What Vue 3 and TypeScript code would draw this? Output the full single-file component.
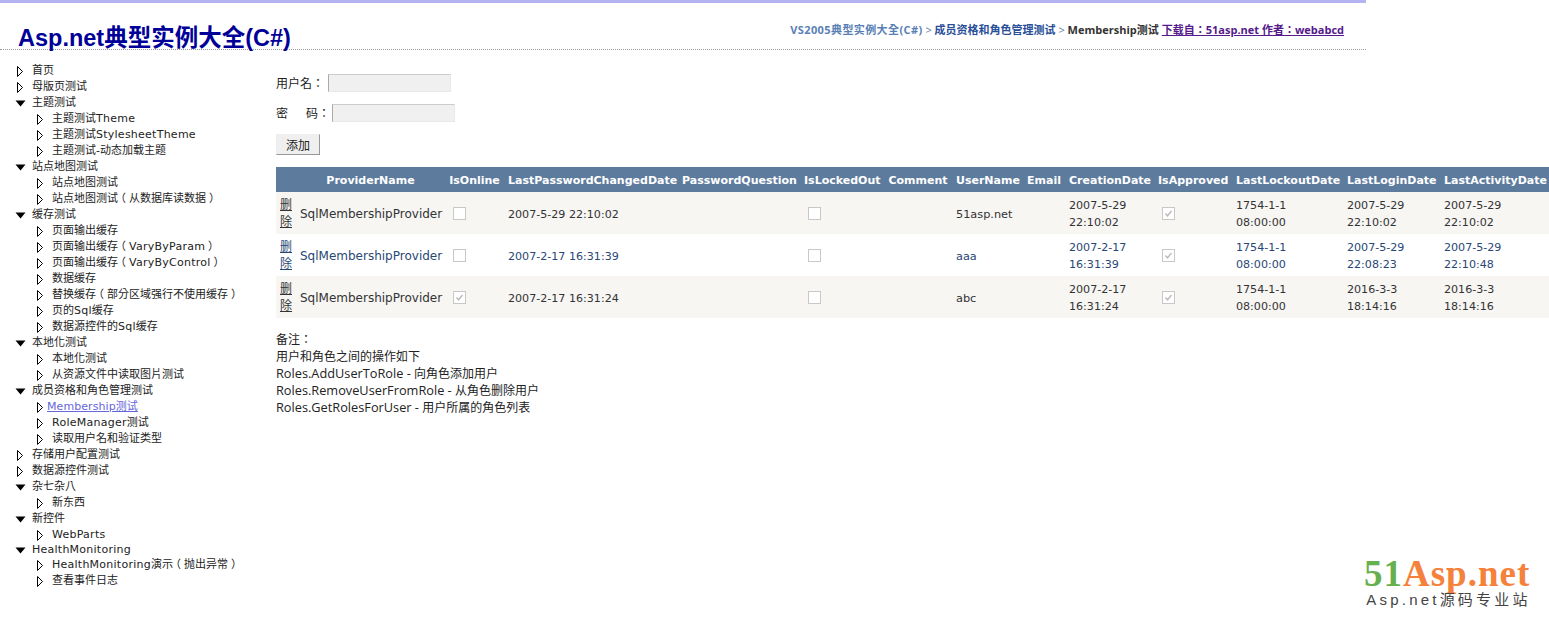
<script setup lang="ts">
interface TreeItem {
  label: string;
  level: number;
  open?: boolean;
  active?: boolean;
  short?: boolean;
}
interface UserRow {
  online: boolean;
  changed: string;
  name: string;
  created: string[];
  lockout: string[];
  login: string[];
  activity: string[];
}

const tree: TreeItem[] = [
  { label: '首页', level: 1 },
  { label: '母版页测试', level: 1 },
  { label: '主题测试', level: 1, open: true },
  { label: '主题测试Theme', level: 2 },
  { label: '主题测试StylesheetTheme', level: 2 },
  { label: '主题测试-动态加载主题', level: 2 },
  { label: '站点地图测试', level: 1, open: true },
  { label: '站点地图测试', level: 2 },
  { label: '站点地图测试（从数据库读数据）', level: 2 },
  { label: '缓存测试', level: 1, open: true },
  { label: '页面输出缓存', level: 2 },
  { label: '页面输出缓存（VaryByParam）', level: 2 },
  { label: '页面输出缓存（VaryByControl）', level: 2 },
  { label: '数据缓存', level: 2 },
  { label: '替换缓存（部分区域强行不使用缓存）', level: 2 },
  { label: '页的Sql缓存', level: 2 },
  { label: '数据源控件的Sql缓存', level: 2 },
  { label: '本地化测试', level: 1, open: true },
  { label: '本地化测试', level: 2 },
  { label: '从资源文件中读取图片测试', level: 2 },
  { label: '成员资格和角色管理测试', level: 1, open: true },
  { label: 'Membership测试', level: 2, active: true },
  { label: 'RoleManager测试', level: 2 },
  { label: '读取用户名和验证类型', level: 2 },
  { label: '存储用户配置测试', level: 1 },
  { label: '数据源控件测试', level: 1 },
  { label: '杂七杂八', level: 1, open: true },
  { label: '新东西', level: 2 },
  { label: '新控件', level: 1, open: true },
  { label: 'WebParts', level: 2, short: true },
  { label: 'HealthMonitoring', level: 1, open: true, short: true },
  { label: 'HealthMonitoring演示（抛出异常）', level: 2 },
  { label: '查看事件日志', level: 2 },
];

// brackets sit centred in the original font and latin runs are a bit wider
const parts = (label: string) => label.split(/(（|）|[A-Za-z]+)/).filter(Boolean);
const partClass = (p: string) => (p === '（' ? 'open-b' : p === '）' ? 'close-b' : /^[A-Za-z]/.test(p) ? 'latin' : '');

const headers = [
  '', 'ProviderName', 'IsOnline', 'LastPasswordChangedDate', 'PasswordQuestion', 'IsLockedOut',
  'Comment', 'UserName', 'Email', 'CreationDate', 'IsApproved', 'LastLockoutDate', 'LastLoginDate', 'LastActivityDate',
];
const widths = [20, 149, 59, 174, 122, 84, 68, 71, 42, 89, 78, 111, 97, 109];

const rows: UserRow[] = [
  {
    online: false, changed: '2007-5-29 22:10:02', name: '51asp.net',
    created: ['2007-5-29', '22:10:02'], lockout: ['1754-1-1', '08:00:00'],
    login: ['2007-5-29', '22:10:02'], activity: ['2007-5-29', '22:10:02'],
  },
  {
    online: false, changed: '2007-2-17 16:31:39', name: 'aaa',
    created: ['2007-2-17', '16:31:39'], lockout: ['1754-1-1', '08:00:00'],
    login: ['2007-5-29', '22:08:23'], activity: ['2007-5-29', '22:10:48'],
  },
  {
    online: true, changed: '2007-2-17 16:31:24', name: 'abc',
    created: ['2007-2-17', '16:31:24'], lockout: ['1754-1-1', '08:00:00'],
    login: ['2016-3-3', '18:14:16'], activity: ['2016-3-3', '18:14:16'],
  },
];

const notes = [
  { en: '', zh: '备注：' },
  { en: '', zh: '用户和角色之间的操作如下' },
  { en: 'Roles.AddUserToRole - ', zh: '向角色添加用户' },
  { en: 'Roles.RemoveUserFromRole - ', zh: '从角色删除用户' },
  { en: 'Roles.GetRolesForUser - ', zh: '用户所属的角色列表' },
];
</script>

<template>
  <div class="page">
    <header class="top">
      <h1 class="title">Asp.net典型实例大全(C#)</h1>
      <div class="crumbs">
        <span class="c1">VS2005典型实例大全(C#)</span>
        <span class="sep"> &gt; </span>
        <span class="c2">成员资格和角色管理测试</span>
        <span class="sep"> &gt; </span>
        <span class="c3">Membership测试</span>
        <a class="c4">下载自：51asp.net 作者：webabcd</a>
      </div>
    </header>

    <div class="body">
      <nav class="tree">
        <div v-for="(item, i) in tree" :key="i" class="node" :class="['lv' + item.level, { short: item.short }]">
          <svg v-if="item.open" class="arrow" width="11" height="7" viewBox="0 0 11 7">
            <path d="M0.5 0.5H10.5L5.5 6.5Z" fill="#000" />
          </svg>
          <svg v-else class="arrow closed" width="11" height="11" viewBox="0 0 11 11">
            <path d="M2.5 0.5L7.5 5.5L2.5 10.5Z" fill="#fff" stroke="#000" />
          </svg>
          <a v-if="item.active" class="active">{{ item.label }}</a>
          <span v-else><span v-for="(p, j) in parts(item.label)" :key="j" :class="partClass(p)">{{ p }}</span></span>
        </div>
      </nav>

      <main class="content">
        <div class="field">
          <span class="lbl">用户名：</span>
          <input class="txt" type="text" />
        </div>
        <div class="field">
          <span class="lbl wide">密<i class="gap"></i>码：</span>
          <input class="txt" type="password" />
        </div>
        <button class="btn" type="button">添加</button>

        <table class="grid">
          <colgroup>
            <col v-for="(w, i) in widths" :key="i" :style="{ width: w + 'px' }" />
          </colgroup>
          <thead>
            <tr>
              <th v-for="h in headers" :key="h">{{ h }}</th>
            </tr>
          </thead>
          <tbody>
            <tr v-for="(r, i) in rows" :key="i" :class="i % 2 ? 'alt' : 'odd'">
              <td class="del"><a>删除</a></td>
              <td>SqlMembershipProvider</td>
              <td class="ck"><span class="box"><svg v-if="r.online" width="11" height="11" viewBox="0 0 11 11"><path d="M2.5 5.5L4.5 7.8L8.5 3" fill="none" stroke="#bbb" stroke-width="1.4" /></svg></span></td>
              <td class="date">{{ r.changed }}</td>
              <td></td>
              <td class="ck"><span class="box"></span></td>
              <td></td>
              <td class="uname">{{ r.name }}</td>
              <td></td>
              <td class="date">{{ r.created[0] }}<br />{{ r.created[1] }}</td>
              <td class="ck"><span class="box"><svg width="11" height="11" viewBox="0 0 11 11"><path d="M2.5 5.5L4.5 7.8L8.5 3" fill="none" stroke="#bbb" stroke-width="1.4" /></svg></span></td>
              <td class="date">{{ r.lockout[0] }}<br />{{ r.lockout[1] }}</td>
              <td class="date">{{ r.login[0] }}<br />{{ r.login[1] }}</td>
              <td class="date">{{ r.activity[0] }}<br />{{ r.activity[1] }}</td>
            </tr>
          </tbody>
        </table>

        <div class="notes">
          <div v-for="n in notes" :key="n.zh"><span class="en">{{ n.en }}</span>{{ n.zh }}</div>
        </div>
      </main>
    </div>

    <div class="logo">
      <div class="logo-main"><span class="green">51</span>Asp.net</div>
      <div class="logo-sub">Asp.net源码专业站</div>
    </div>
  </div>
</template>

<style>
html, body {
  margin: 0;
  overflow: hidden;
  background: #fff;
}
</style>

<style scoped>
.page {
  position: relative;
  width: 1549px;
  height: 626px;
  overflow: hidden;
  font-family: "DejaVu Sans", "Noto Sans CJK TC", sans-serif;
  font-size: 11px;
  color: #000;
}
.top {
  width: 1366px;
  height: 46px;
  border-top: 3px solid #b4b4f2;
  border-bottom: 1px dotted #999;
  display: flex;
  justify-content: space-between;
}
.title {
  margin: 21px 0 0 18px;
  font-family: "Liberation Sans", "Noto Sans CJK SC", sans-serif;
  font-size: 23.5px;
  line-height: 28px;
  font-weight: bold;
  color: #000099;
}
.crumbs {
  margin: 20px 22px 0 0;
  font-size: 11px;
  line-height: 14px;
  font-family: "Open Sans", "Noto Sans CJK TC", sans-serif;
  font-weight: 700;
  white-space: pre;
}
.c1 { color: #5a7fb5; letter-spacing: 0.4px; }
.c2 { color: #284e98; }
.c3 { color: #333; }
.sep { color: #5d7b9d; font-weight: 400; }
.c4 { color: #551a8b; text-decoration: underline; margin-left: 3px; }
.body {
  display: flex;
  align-items: flex-start;
}
.tree {
  width: 276px;
  flex: none;
  padding-top: 13px;
}
.node {
  position: relative;
  height: 16px;
  line-height: 16px;
  white-space: nowrap;
  color: #222;
}
.node.short {
  height: 15px;
}
.lv1 { padding-left: 32px; }
.lv2 { padding-left: 52px; }
.arrow {
  position: absolute;
  top: 5px;
  left: 15px;
}
.arrow.closed {
  top: 3px;
}
.lv2 .arrow {
  left: 35px;
}
.active {
  margin-left: -5px;
  color: #6666dd;
  text-decoration: underline;
  letter-spacing: 0.08px;
}
.latin {
  letter-spacing: 0.25px;
}
.open-b {
  position: relative;
  left: -3px;
}
.close-b {
  position: relative;
  left: 3px;
}
.content {
  flex: none;
  padding-top: 24px;
  font-family: "Open Sans", "Noto Sans CJK TC", sans-serif;
  font-size: 12px;
}
.field {
  display: flex;
  align-items: center;
  height: 18px;
  margin-bottom: 12px;
  color: #222;
}
.lbl {
  width: 52px;
  white-space: nowrap;
}
.lbl.wide {
  width: 56px;
}
.gap {
  display: inline-block;
  width: 18px;
}
.txt {
  width: 123px;
  height: 18px;
  padding: 0;
  box-sizing: border-box;
  background: #f0f0f0;
  border: 1px solid #e8e8e8;
  border-left-color: #aaa;
  border-top-color: #ccc;
}
.btn {
  display: block;
  width: 44px;
  height: 21px;
  padding: 0;
  font-family: inherit;
  font-size: 12px;
  color: #222;
  background: #efefef;
  border: 1px solid #eee;
  border-right-color: #999;
  border-bottom-color: #999;
}
.grid {
  margin-top: 12px;
  border-collapse: collapse;
  table-layout: fixed;
  width: 1273px;
  font-family: "DejaVu Sans", "Noto Sans CJK TC", sans-serif;
  font-size: 12px;
  line-height: 17px;
}
.grid th {
  height: 25px;
  padding: 2px 4px 0;
  box-sizing: border-box;
  background: #5d7b9d;
  color: #fff;
  font-size: 11px;
  font-weight: bold;
  white-space: nowrap;
  text-align: center;
}
.grid td {
  height: 42px;
  box-sizing: border-box;
  padding: 5px 4px 3px;
  white-space: nowrap;
  text-align: left;
}
.grid td.date {
  font-size: 11.1px;
}
.grid td.uname {
  font-size: 11.3px;
}
.odd td {
  background: #f7f6f3;
  color: #333;
}
.alt td {
  background: #fff;
  color: #284775;
}
.grid td.del {
  white-space: normal;
  word-break: break-all;
  text-decoration: underline;
}
.grid td.ck {
  padding: 4px 4px 4px 8px;
}
.box {
  display: inline-flex;
  width: 13px;
  height: 13px;
  box-sizing: border-box;
  border: 1px solid #c8c8c8;
  background: #fff;
  vertical-align: middle;
}
.notes {
  margin-top: 13px;
  font-size: 12px;
  line-height: 17px;
  color: #222;
}
.en {
  font-size: 12.75px;
}
.logo {
  position: absolute;
  right: 19px;
  bottom: 17px;
  width: 166px;
  text-align: center;
}
.logo-main {
  font-family: "Liberation Serif", serif;
  font-weight: bold;
  font-size: 37px;
  line-height: 34px;
  letter-spacing: 1px;
  color: #f5813a;
  white-space: nowrap;
}
.green {
  color: #66b04e;
}
.logo-sub {
  font-family: "Liberation Sans", "Noto Sans CJK SC", sans-serif;
  font-size: 15px;
  line-height: 18px;
  letter-spacing: 3.2px;
  margin-right: -3px;
  color: #444;
  white-space: nowrap;
}
</style>
